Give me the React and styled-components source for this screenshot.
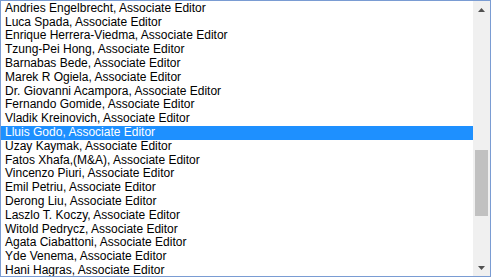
import React from "react";
import styled, { createGlobalStyle } from "styled-components";

const Global = createGlobalStyle`
  html, body { margin: 0; padding: 0; background: #ffffff; }
  body { font-family: "Liberation Sans", Arial, sans-serif; }
`;

const Box = styled.div`
  box-sizing: border-box;
  width: 491px;
  height: 277px;
  border: 1px solid #7a9cd3;
  display: flex;
  background: #fff;
  overflow: hidden;
`;

const List = styled.div`
  flex: 1;
  overflow: hidden;
  padding-top: 0.8px;
`;

const Row = styled.div`
  height: 13.8px;
  line-height: 13.8px;
  font-size: 12px;
  padding-left: 4px;
  white-space: nowrap;
  color: ${(p) => (p.$selected ? "#ffffff" : "#000000")};
  background: ${(p) => (p.$selected ? "#1e90ff" : "transparent")};
`;

const Track = styled.div`
  width: 17px;
  background: #f0f0f0;
  display: flex;
  flex-direction: column;
  align-items: center;
`;

const ArrowBtn = styled.div`
  height: 17px;
  width: 17px;
  display: flex;
  align-items: center;
  justify-content: center;
`;

const Gutter = styled.div`
  flex: 1;
  width: 100%;
  display: flex;
  flex-direction: column;
  align-items: center;
`;

const Thumb = styled.div`
  margin-top: 132px;
  width: 13px;
  height: 66px;
  background: #c1c1c1;
`;

const Up = () => (
  <svg width="7" height="4" viewBox="0 0 7 4">
    <polygon points="0,4 7,4 3.5,0" fill="#505050" />
  </svg>
);
const Down = () => (
  <svg width="7" height="4" viewBox="0 0 7 4">
    <polygon points="0,0 7,0 3.5,4" fill="#505050" />
  </svg>
);

const names = [
  "Andries Engelbrecht",
  "Luca Spada",
  "Enrique Herrera-Viedma",
  "Tzung-Pei Hong",
  "Barnabas Bede",
  "Marek R Ogiela",
  "Dr. Giovanni Acampora",
  "Fernando Gomide",
  "Vladik Kreinovich",
  "Lluis Godo",
  "Uzay Kaymak",
  "Fatos Xhafa,(M&A)",
  "Vincenzo Piuri",
  "Emil Petriu",
  "Derong Liu",
  "Laszlo T. Koczy",
  "Witold Pedrycz",
  "Agata Ciabattoni",
  "Yde Venema",
  "Hani Hagras",
];

export default function App() {
  return (
    <>
      <Global />
      <Box>
        <List>
          {names.map((n, i) => (
            <Row key={n} $selected={i === 9}>
              {n}, Associate Editor
            </Row>
          ))}
        </List>
        <Track>
          <ArrowBtn>
            <Up />
          </ArrowBtn>
          <Gutter>
            <Thumb />
          </Gutter>
          <ArrowBtn>
            <Down />
          </ArrowBtn>
        </Track>
      </Box>
    </>
  );
}
